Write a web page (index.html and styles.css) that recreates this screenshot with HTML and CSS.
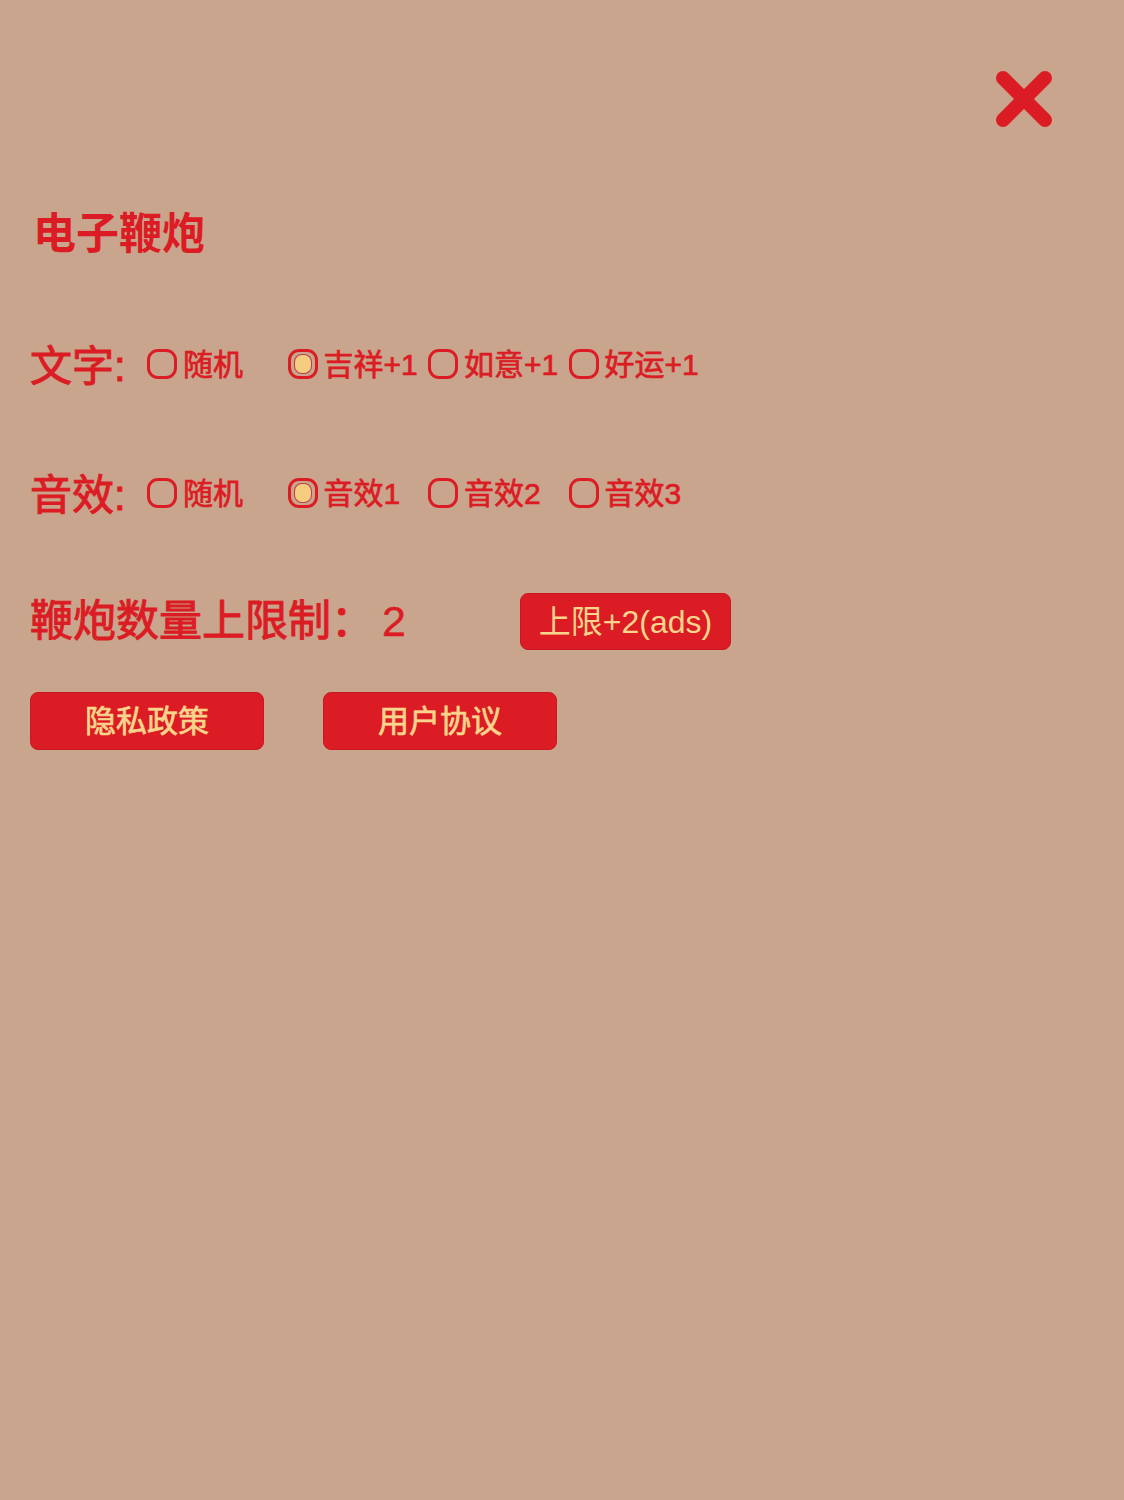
FILE: index.html
```html
<!DOCTYPE html>
<html lang="zh-CN">
<head>
    <meta charset="UTF-8">
    <meta name="viewport" content="width=device-width, initial-scale=1.0">
    <title>电子鞭炮 - 设置</title>
    <link rel="stylesheet" href="styles.css">
</head>
<body>
    <div class="settings">
        <div class="top-bar">
            <button class="close-btn" aria-label="关闭">
                <svg width="60" height="60" viewBox="0 0 60 60">
                    <path d="M9 9 L51 51 M51 9 L9 51" stroke="#dc1c24" stroke-width="14" stroke-linecap="round"/>
                </svg>
            </button>
        </div>

        <h1 class="title">电子鞭炮</h1>

        <div class="option-row">
            <span class="row-label">文字:</span>
            <label class="choice"><span class="box"></span>随机</label>
            <label class="choice checked"><span class="box"></span>吉祥+1</label>
            <label class="choice"><span class="box"></span>如意+1</label>
            <label class="choice"><span class="box"></span>好运+1</label>
        </div>

        <div class="option-row">
            <span class="row-label">音效:</span>
            <label class="choice"><span class="box"></span>随机</label>
            <label class="choice checked"><span class="box"></span>音效1</label>
            <label class="choice"><span class="box"></span>音效2</label>
            <label class="choice"><span class="box"></span>音效3</label>
        </div>

        <div class="limit-row">
            <span class="limit-text">鞭炮数量上限制：<span class="limit-num">2</span></span>
            <button class="red-btn ads-btn">上限+2(ads)</button>
        </div>

        <div class="link-row">
            <button class="red-btn link-btn">隐私政策</button>
            <button class="red-btn link-btn">用户协议</button>
        </div>
    </div>
</body>
</html>
```

FILE: styles.css
```css
body {
    margin: 0;
    background: #c8a58c;
    color: #dc1c24;
    font-family: "Liberation Sans", "Noto Sans CJK SC", sans-serif;
}
.settings {
    padding: 69px 70px 0 30px;
}
.top-bar {
    display: flex;
    justify-content: flex-end;
}
.close-btn {
    background: none;
    border: 0;
    padding: 0;
    width: 60px;
    height: 60px;
}
.close-btn svg {
    display: block;
}
.title {
    margin: 80px 0 0 3px;
    font-size: 43px;
    line-height: 50px;
    font-weight: 700;
}
/* no medium weight installed, so thicken the regular one a little */
.row-label, .choice, .limit-text, .link-btn {
    font-weight: 400;
    -webkit-text-stroke: 0.7px currentColor;
}
.option-row {
    display: flex;
    align-items: center;
    height: 56px;
    margin-top: 75px;
}
.option-row + .option-row {
    margin-top: 73px;
}
.row-label {
    width: 116px;
    font-size: 42px;
    -webkit-text-stroke-width: 1px;
    white-space: nowrap;
}
.choice {
    display: flex;
    align-items: center;
    gap: 6px;
    width: 140.5px;
    font-size: 30px;
    white-space: nowrap;
}
.box {
    box-sizing: border-box;
    width: 30px;
    height: 30px;
    margin-top: 4px;
    margin-left: 1px;
    border: 3px solid #dc1c24;
    border-radius: 11px;
    display: flex;
    align-items: center;
    justify-content: center;
}
.checked .box::after {
    content: "";
    width: 16px;
    height: 18px;
    border-radius: 7px;
    background: #f6cc7e;
    box-shadow: 0 0 0 1px #b8404a;
}
.limit-row {
    display: flex;
    align-items: center;
    margin-top: 74px;
}
.limit-text {
    width: 490px;
    font-size: 43px;
    line-height: 49px;
    -webkit-text-stroke-width: 1px;
    white-space: nowrap;
}
.limit-num {
    margin-left: 8px;
    -webkit-text-stroke-width: 0.4px;
}
.red-btn {
    box-sizing: border-box;
    background: #dc1c24;
    color: #f8d48c;
    border: 1px solid #c81820;
    border-radius: 8px;
    font-family: "Liberation Sans", "Noto Sans CJK SC", sans-serif;
    padding: 0 0 5px;
}
.ads-btn {
    width: 211px;
    height: 57px;
    font-size: 32px;
}
.link-row {
    display: flex;
    gap: 59px;
    margin-top: 42px;
}
.link-btn {
    width: 234px;
    height: 58px;
    font-size: 31px;
}
```
